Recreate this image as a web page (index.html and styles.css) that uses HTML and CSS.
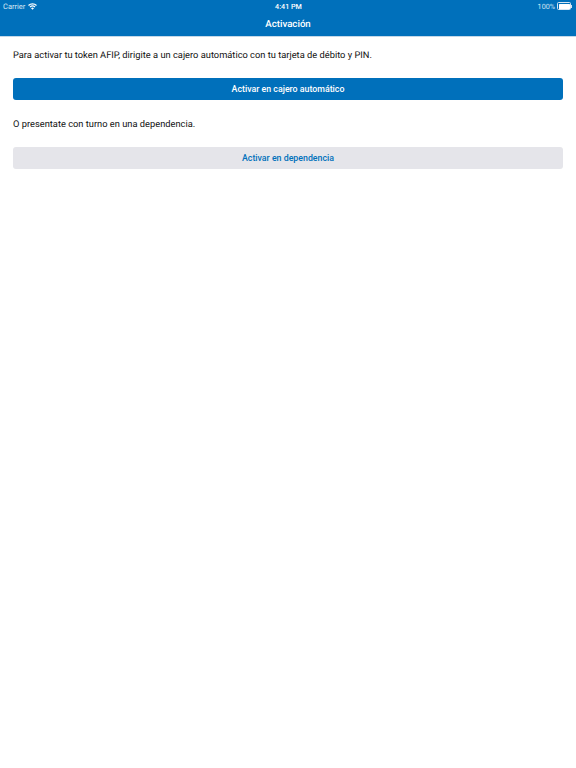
FILE: index.html
```html
<!DOCTYPE html>
<html lang="es">
<head>
    <meta charset="UTF-8">
    <meta name="viewport" content="width=device-width, initial-scale=1.0">
    <title>Activación</title>
    <link rel="stylesheet" href="styles.css">
</head>
<body>
    <div class="header">
        <div class="status-bar">
            <div class="status-left">
                <span>Carrier</span>
                <svg class="wifi" width="9" height="7" viewBox="0 0 18 14">
                    <path d="M1 5 A11.5 11.5 0 0 1 17 5" fill="none" stroke="#fff" stroke-width="2.6"/>
                    <path d="M4 8 A7.5 7.5 0 0 1 14 8" fill="none" stroke="#fff" stroke-width="2.6"/>
                    <path d="M9 13.5 L6 10.5 A4.3 4.3 0 0 1 12 10.5 Z" fill="#fff"/>
                </svg>
            </div>
            <div class="status-time">4:41 PM</div>
            <div class="status-right">
                <span>100%</span>
                <div class="battery"><div class="battery-fill"></div></div>
                <div class="battery-tip"></div>
            </div>
        </div>
        <div class="nav-title">Activación</div>
    </div>

    <div class="content">
        <p class="message">Para activar tu token AFIP, dirigite a un cajero automático con tu tarjeta de débito y PIN.</p>
        <button class="action-button primary">Activar en cajero automático</button>
        <p class="message">O presentate con turno en una dependencia.</p>
        <button class="action-button secondary">Activar en dependencia</button>
    </div>
</body>
</html>
```

FILE: styles.css
```css
body {
    font-family: Roboto, "Liberation Sans", sans-serif;
    margin: 0;
    padding: 0;
    background: #fff;
    color: #000;
    text-rendering: geometricPrecision;
}
.header {
    background: #0070bb;
    color: #fff;
    height: 36px;
    border-bottom: 1px solid #c4d8e8;
}
.status-bar {
    display: grid;
    grid-template-columns: 1fr auto 1fr;
    align-items: center;
    height: 12px;
    padding: 0 4px 0 3px;
    font-size: 7.5px;
    color: #d5e6f3;
}
.status-left {
    display: flex;
    align-items: center;
    gap: 3px;
}
.status-time {
    font-size: 7.2px;
    font-weight: 500;
    color: #fff;
    margin-left: 2px;
}
.status-right {
    display: flex;
    align-items: center;
    justify-content: flex-end;
    gap: 2px;
    font-size: 7.2px;
}
.battery {
    width: 11px;
    height: 5px;
    padding: 0.5px;
    border: 0.5px solid #d5e6f3;
    border-radius: 1.5px;
}
.battery-fill {
    height: 100%;
    background: #fff;
    border-radius: 0.5px;
}
.battery-tip {
    width: 1px;
    height: 3px;
    margin-left: -2px;
    background: #d5e6f3;
}
.nav-title {
    text-align: center;
    font-size: 9.7px;
    font-weight: 500;
    line-height: 25px;
}
.content {
    padding: 12px 13px;
}
.message {
    margin: 0;
    font-size: 9.3px;
    line-height: 14px;
    color: #111;
}
.action-button {
    display: block;
    width: 100%;
    height: 22px;
    margin: 15px 0 18px;
    padding: 0;
    border: none;
    border-radius: 3px;
    font-family: inherit;
    font-size: 8.8px;
    font-weight: 500;
    cursor: pointer;
}
.primary {
    background: #0070bb;
    color: #fff;
}
.secondary {
    background: #e5e5ea;
    color: #0070bb;
}
```
